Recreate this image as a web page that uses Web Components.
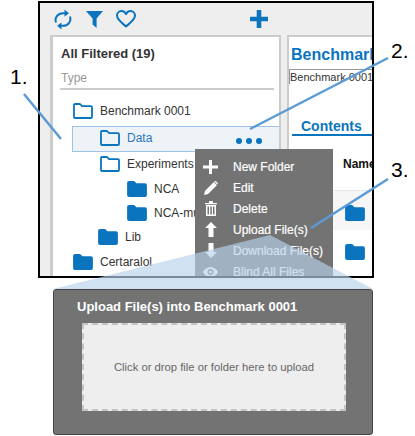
<!DOCTYPE html>
<html>
<head>
<meta charset="utf-8">
<style>
    html, body { margin: 0; padding: 0; background: #fff; }
    body { font-family: "Liberation Sans", Arial, sans-serif; width: 415px; height: 436px; overflow: hidden; position: relative; }
</style>
</head>
<body>
<figure-page>
    <app-window>
        <tree-panel title-text="All Filtered (19)" filter-text="Type">
            <tree-row indent="20" kind="open" label="Benchmark 0001"></tree-row>
            <tree-row indent="47" kind="open" label="Data" selected></tree-row>
            <tree-row indent="47" kind="open" label="Experiments"></tree-row>
            <tree-row indent="74" kind="solid" label="NCA"></tree-row>
            <tree-row indent="74" kind="solid" label="NCA-mu"></tree-row>
            <tree-row indent="45" kind="solid" label="Lib"></tree-row>
            <tree-row indent="20" kind="solid" label="Certaralol"></tree-row>
        </tree-panel>
        <detail-panel></detail-panel>
        <context-menu></context-menu>
    </app-window>
    <upload-dialog></upload-dialog>
</figure-page>
<callout-overlay></callout-overlay>

<script>
// Folder icon, outline or filled
class FolderIcon extends HTMLElement {
    connectedCallback() {
        const solid = this.getAttribute('kind') === 'solid';
        const fill = solid ? '#0a74bf' : 'none';
        this.attachShadow({ mode: 'open' });
        this.shadowRoot.innerHTML = `
            <style>
                :host { display: block; width: 20px; height: 16px; }
                svg { display: block; }
            </style>
            <svg width="20" height="16" viewBox="0 0 20 16">
                <path d="M1 14V2C1 1.400 1.400 1 2 1H7l2 2.200h9c.6 0 1 .4 1 1V14c0 .6-.4 1-1 1H2c-.6 0-1-.4-1-1z"
                      fill="${fill}" stroke="#0a74bf" stroke-width="1.800" stroke-linejoin="round"/>
            </svg>
        `;
    }
}

class FigurePage extends HTMLElement {
    constructor() {
        super();
        this.attachShadow({ mode: 'open' });
        this.shadowRoot.innerHTML = `
            <style>
                :host { display: flex; flex-direction: column; align-items: flex-start; padding: 1px 0 0 38px; }
                ::slotted(upload-dialog) { margin: 11px 0 0 15px; }
            </style>
            <slot></slot>
        `;
    }
}

class AppWindow extends HTMLElement {
    constructor() {
        super();
        this.attachShadow({ mode: 'open' });
        this.shadowRoot.innerHTML = `
            <style>
                :host { display: flex; flex-direction: column; position: relative; box-sizing: border-box;
                        width: 336px; height: 277px; border: 2px solid #000; background: #eee; overflow: hidden; }
                .bar { flex: none; height: 32px; display: flex; align-items: center; padding-left: 14px; }
                .bar svg { display: block; }
                .filter { margin-left: 14px; }
                .heart { margin-left: 13px; }
                .plus { margin-left: 114px; }
                .panels { flex: 1; min-height: 0; display: flex; gap: 6px; padding-left: 10px; }
                .panels ::slotted(tree-panel) { flex: none; }
                .panels ::slotted(detail-panel) { flex: 1; min-width: 0; }
            </style>
            <div class="bar">
                <svg width="18" height="21" viewBox="0 0 18 21" fill="none" stroke="#0a74bf" stroke-width="2">
                    <path d="M2 13.500C.4 9 3.600 4.200 9 4.200h2.500"/>
                    <path d="M16 7.500c1.600 4.500-1.600 9.300-7 9.300H6.500"/>
                    <path d="M10.500 .6l4.400 3.600-4.400 3.600z" fill="#0a74bf" stroke="none"/>
                    <path d="M7.500 13.400l-4.400 3.400 4.400 3.600z" fill="#0a74bf" stroke="none"/>
                </svg>
                <svg class="filter" width="17" height="17" viewBox="0 0 17 17"><path d="M0 0h17L10.600 7.400V17L6.600 13.600V7.400z" fill="#0a74bf"/></svg>
                <svg class="heart" width="20" height="18" viewBox="0 0 20 18"><path d="M10 16.500C6 13 1 9.800 1 5.600 1 2.900 3 1.100 5.300 1.100 7.300 1.100 9 2.100 10 4c1-1.900 2.700-2.900 4.700-2.900C17 1.100 19 2.900 19 5.600c0 4.200-5 7.400-9 10.900z" fill="none" stroke="#0a74bf" stroke-width="2" stroke-linejoin="round"/></svg>
                <svg class="plus" width="18" height="18" viewBox="0 0 18 18"><path d="M6.700 0h4.600v6.700H18v4.600h-6.700V18H6.700v-6.700H0V6.700h6.700z" fill="#0a74bf"/></svg>
            </div>
            <div class="panels"><slot></slot></div>
        `;
    }
}

class TreePanel extends HTMLElement {
    connectedCallback() {
        this.attachShadow({ mode: 'open' });
        this.shadowRoot.innerHTML = `
            <style>
                :host { display: block; box-sizing: border-box; width: 231px; background: #fff;
                        border: 2px solid #ccc; border-left-width: 3px; border-bottom: 0; color: #333; }
                h2 { margin: 0; padding: 9px 0 0 8px; font-size: 13px; line-height: 16px; font-weight: bold; color: #333; }
                .type { margin: 9px 5px 0 7px; padding-left: 1px; height: 17px; line-height: 15px; font-size: 12px; color: #999;
                        border-bottom: 2px solid #ccc; }
                .rows { padding-top: 9px; }
            </style>
            <h2>${this.getAttribute('title-text')}</h2>
            <div class="type">${this.getAttribute('filter-text')}</div>
            <div class="rows"><slot></slot></div>
        `;
    }
}

class TreeRow extends HTMLElement {
    connectedCallback() {
        const selected = this.hasAttribute('selected');
        this.attachShadow({ mode: 'open' });
        this.shadowRoot.innerHTML = `
            <style>
                :host { display: block; }
                .row { display: flex; align-items: center; gap: 7px; height: 24.300px; box-sizing: border-box;
                       padding-left: ${this.getAttribute('indent')}px; font-size: 12px; color: #333; white-space: nowrap; }
                .row.selected { margin: 3px 0 0 19px; padding-left: ${this.getAttribute('indent') - 20}px; padding-bottom: 2px; color: #2f75bb;
                                background: #eef3f8; border: 1px solid #9cc3ec; border-right: 0; height: 26px; }
                .dots { display: flex; gap: 4px; margin: 6px 17px 0 auto; }
                .dots i { width: 6px; height: 6px; border-radius: 50%; background: #0a74bf; }
            </style>
            <div class="row ${selected ? 'selected' : ''}">
                <folder-icon kind="${this.getAttribute('kind')}"></folder-icon>
                <span>${this.getAttribute('label')}</span>
                ${selected ? '<div class="dots"><i></i><i></i><i></i></div>' : ''}
            </div>
        `;
    }
}

class DetailPanel extends HTMLElement {
    constructor() {
        super();
        this.attachShadow({ mode: 'open' });
        this.shadowRoot.innerHTML = `
            <style>
                :host { display: block; box-sizing: border-box; background: #fff; border: 2px solid #ccc; border-width: 2px 0 0 2px;
                        overflow: hidden; white-space: nowrap; }
                h1 { margin: 0; padding: 9px 0 0 2px; font-size: 16px; line-height: 18px; color: #0a74bf; }
                .name { margin-top: 5px; height: 14px; line-height: 14px; font-size: 11px; color: #333; border-top: 1px solid #999; border-left: 1px solid #999; }
                .tab { margin: 34px 0 0 3px; height: 16px; border-bottom: 2px solid #0a74bf; font-size: 14px; line-height: 16px; font-weight: bold; color: #0a74bf; padding-left: 9px; }
                .head { height: 55px; padding: 21px 0 0 54px; box-sizing: border-box; font-size: 12px; font-weight: bold; color: #111; border-bottom: 1px solid #e8e8e8; }
                .item { height: 40px; padding: 14px 0 0 56px; box-sizing: border-box; }
                .item.alt { background: #f6f6f6; height: 39px; }
            </style>
            <h1>Benchmark</h1>
            <div class="name">Benchmark 0001</div>
            <div class="tab">Contents</div>
            <div class="head">Name</div>
            <div class="item alt"><folder-icon kind="solid"></folder-icon></div>
            <div class="item"><folder-icon kind="solid"></folder-icon></div>
        `;
    }
}

class MenuItem extends HTMLElement {
    connectedCallback() {
        this.attachShadow({ mode: 'open' });
        this.shadowRoot.innerHTML = `
            <style>
                :host { display: flex; align-items: center; height: 21px; font-size: 12px; color: #fff; white-space: nowrap; -webkit-text-stroke: 0.2px #fff; }
                .icon { flex: none; width: 38px; display: flex; justify-content: center; padding-right: 7px; box-sizing: border-box; }
            </style>
            <div class="icon"><slot></slot></div>
            <span>${this.getAttribute('label')}</span>
        `;
    }
}

class ContextMenu extends HTMLElement {
    constructor() {
        super();
        this.attachShadow({ mode: 'open' });
        this.shadowRoot.innerHTML = `
            <style>
                :host { position: absolute; left: 155px; top: 146px; width: 138px; height: 130px; padding-top: 7px; box-sizing: border-box; background: #737373; }
                svg { display: block; fill: #fff; }
            </style>
            <menu-item label="New Folder"><svg width="15" height="14" viewBox="0 0 15 14"><path d="M6 0h3v5.500h6v3H9V14H6V8.500H0v-3h6z"/></svg></menu-item>
            <menu-item label="Edit"><svg width="14" height="14" viewBox="0 0 15 15"><path d="M0 15l1-4.300L10.500 1.200l3.300 3.300L4.300 14zM11.400 .4c.5-.5 1.100-.5 1.500 0l1.700 1.700c.4.400.4 1 0 1.400l-.3.300L11 .6z"/></svg></menu-item>
            <menu-item label="Delete"><svg width="12" height="15" viewBox="0 0 12 15"><path d="M0 2h4V.6C4 .3 4.300 0 4.600 0h2.800c.3 0 .6.300.6.600V2h4v1.300H0zM1 4h10v10c0 .6-.4 1-1 1H2c-.6 0-1-.4-1-1zm1.500 1.500v8h1.500v-8zm2.800 0v8h1.500v-8zm2.700 0v8h1.500v-8z" fill-rule="evenodd"/></svg></menu-item>
            <menu-item label="Upload File(s)"><svg width="12" height="15" viewBox="0 0 12 15"><path d="M6 0l6 6H8.500v9h-5V6H0z"/></svg></menu-item>
            <menu-item label="Download File(s)"><svg width="12" height="15" viewBox="0 0 12 15"><path d="M6 15l6-6H8.500V0h-5v9H0z"/></svg></menu-item>
            <menu-item label="Blind All Files"><svg width="15" height="10" viewBox="0 0 15 10"><path d="M7.500 0C11 0 13.700 2.300 15 5c-1.300 2.700-4 5-7.500 5S1.300 7.700 0 5C1.300 2.300 4 0 7.500 0zm0 2a3 3 0 100 6 3 3 0 000-6zm0 1.500a1.500 1.500 0 110 3 1.500 1.500 0 010-3z" fill-rule="evenodd"/></svg></menu-item>
        `;
    }
}

class UploadDialog extends HTMLElement {
    constructor() {
        super();
        this.attachShadow({ mode: 'open' });
        this.shadowRoot.innerHTML = `
            <style>
                :host { display: block; box-sizing: border-box; width: 320px; height: 146px; background: #737373;
                        border: 1px solid #444; border-radius: 3px; padding: 0 26px 0 28px; }
                h3 { margin: 0 0 0 -5px; padding-top: 9px; font-size: 13px; line-height: 16px; font-weight: bold; color: #fff; }
                .drop { margin-top: 8px; height: 88px; box-sizing: border-box; background: #eee; border: 2px dashed #c4c4c4;
                        display: flex; align-items: center; justify-content: center; font-size: 11.250px; color: #666; white-space: nowrap; }
            </style>
            <h3>Upload File(s) into Benchmark 0001</h3>
            <div class="drop">Click or drop file or folder here to upload</div>
        `;
    }
}

// Annotations lying over the screenshot: callout lines, numbers and the zoom wedge
class CalloutOverlay extends HTMLElement {
    constructor() {
        super();
        this.attachShadow({ mode: 'open' });
        this.shadowRoot.innerHTML = `
            <style>
                :host { position: absolute; left: 0; top: 0; width: 415px; height: 436px; pointer-events: none; }
                svg { position: absolute; left: 0; top: 0; }
                span { position: absolute; font-size: 21px; line-height: 22px; color: #000; }
            </style>
            <svg width="415" height="436">
                <polygon points="53,289 270,235 373,289" fill="rgb(184,209,235)" fill-opacity="0.66"/>
                <g stroke="#5b9bd5" stroke-width="2.500">
                    <line x1="24" y1="94" x2="61" y2="139"/>
                    <line x1="388" y1="58" x2="250" y2="129"/>
                    <line x1="388" y1="179" x2="311" y2="228"/>
                </g>
            </svg>
            <span style="left:10px;top:66px">1.</span>
            <span style="left:391px;top:40px">2.</span>
            <span style="left:391px;top:159px">3.</span>
        `;
    }
}

customElements.define('folder-icon', FolderIcon);
customElements.define('figure-page', FigurePage);
customElements.define('app-window', AppWindow);
customElements.define('tree-panel', TreePanel);
customElements.define('tree-row', TreeRow);
customElements.define('detail-panel', DetailPanel);
customElements.define('menu-item', MenuItem);
customElements.define('context-menu', ContextMenu);
customElements.define('upload-dialog', UploadDialog);
customElements.define('callout-overlay', CalloutOverlay);
</script>
</body>
</html>
